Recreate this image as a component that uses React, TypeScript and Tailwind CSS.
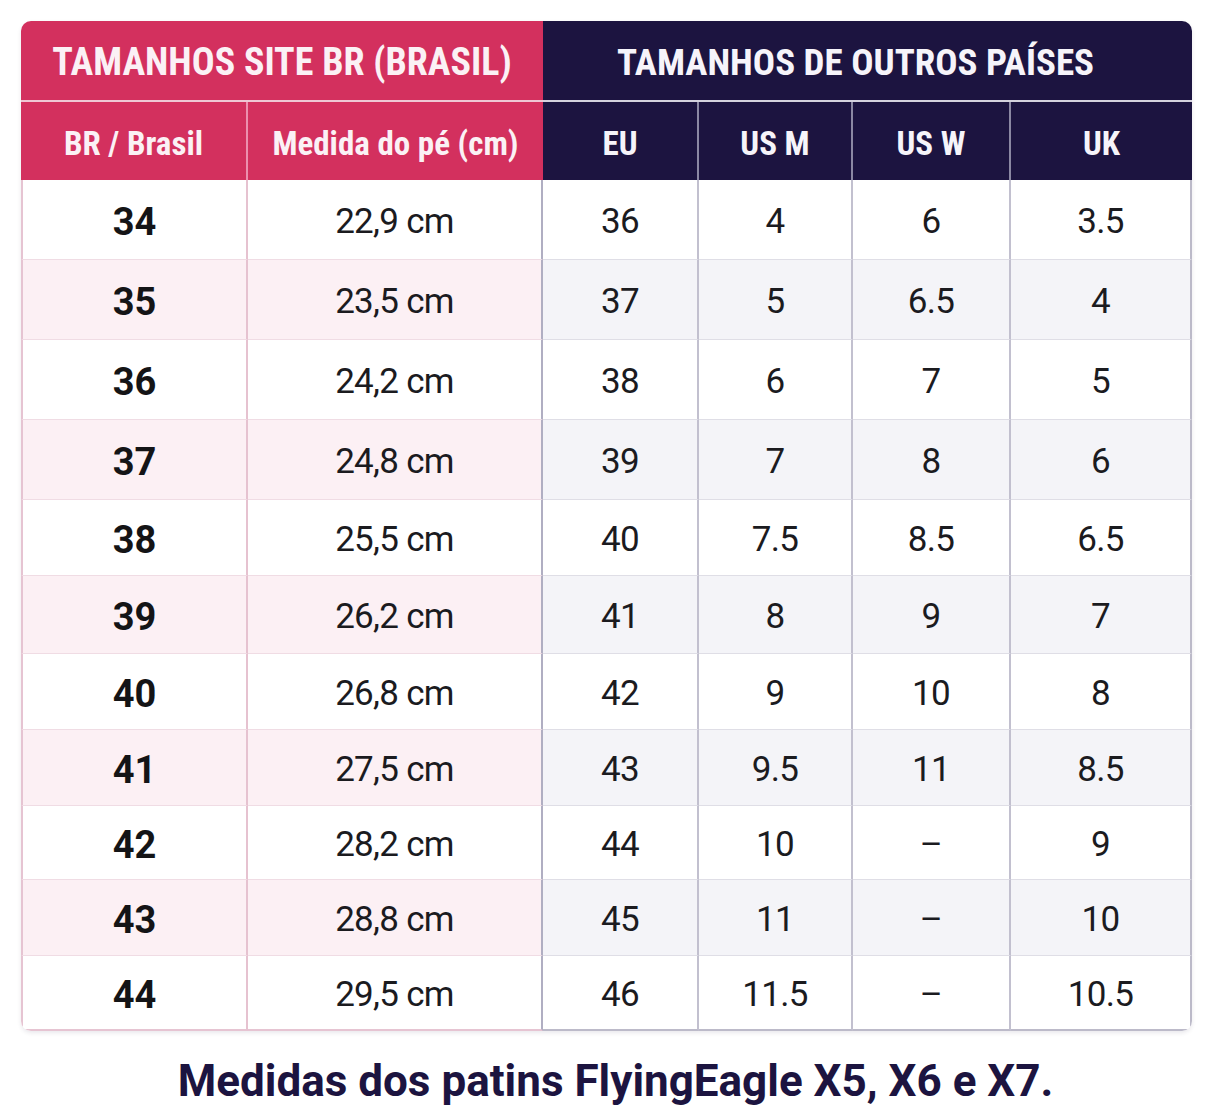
import React from "react";

type Row = { br: string; cm: string; eu: string; usm: string; usw: string; uk: string; h: string };

const rows: Row[] = [
  { br: "34", cm: "22,9 cm", eu: "36", usm: "4", usw: "6", uk: "3.5", h: "h-[80px]" },
  { br: "35", cm: "23,5 cm", eu: "37", usm: "5", usw: "6.5", uk: "4", h: "h-[80px]" },
  { br: "36", cm: "24,2 cm", eu: "38", usm: "6", usw: "7", uk: "5", h: "h-[80px]" },
  { br: "37", cm: "24,8 cm", eu: "39", usm: "7", usw: "8", uk: "6", h: "h-[80px]" },
  { br: "38", cm: "25,5 cm", eu: "40", usm: "7.5", usw: "8.5", uk: "6.5", h: "h-[76px]" },
  { br: "39", cm: "26,2 cm", eu: "41", usm: "8", usw: "9", uk: "7", h: "h-[78px]" },
  { br: "40", cm: "26,8 cm", eu: "42", usm: "9", usw: "10", uk: "8", h: "h-[76px]" },
  { br: "41", cm: "27,5 cm", eu: "43", usm: "9.5", usw: "11", uk: "8.5", h: "h-[76px]" },
  { br: "42", cm: "28,2 cm", eu: "44", usm: "10", usw: "–", uk: "9", h: "h-[74px]" },
  { br: "43", cm: "28,8 cm", eu: "45", usm: "11", usw: "–", uk: "10", h: "h-[76px]" },
  { br: "44", cm: "29,5 cm", eu: "46", usm: "11.5", usw: "–", uk: "10.5", h: "h-[75px]" },
];

const narrow = "font-['Liberation_Sans_Narrow','Roboto_Condensed','DejaVu_Sans_Condensed',sans-serif]";
const roboto = "font-['Roboto','Liberation_Sans',sans-serif]";

export default function App() {
  return (
    <div className="min-h-[1112px] w-[1231px] bg-white">
      <div className="pt-[21px] pl-[21px]">
        <div className="w-[1171px] overflow-hidden rounded-[10px] shadow-[0_2px_4px_rgba(40,30,70,0.10)]">
          {/* top header */}
          <div className="flex h-[79px]">
            <div className={`flex w-[522px] items-center justify-center pt-[4px] bg-[#d3305e] text-[38px] font-bold text-[#fbf1f5] ${narrow}`}>
              TAMANHOS SITE BR (BRASIL)
            </div>
            <div className={`flex w-[649px] items-center justify-center pt-[4px] pr-[24px] bg-[#1c1440] text-[37px] font-bold text-[#f6f4fa] ${narrow}`}>
              TAMANHOS DE OUTROS PAÍSES
            </div>
          </div>
          <div className="flex h-[2px]">
            <div className="w-[522px] bg-[#efc6d4]" />
            <div className="w-[649px] bg-[#d4d2de]" />
          </div>
          {/* sub header */}
          <div className={`flex h-[78px] text-[33px] font-bold ${narrow}`}>
            <div className="flex w-[227px] items-center justify-center pt-[6px] border-r-2 border-r-[#ec8fae] bg-[#d3305e] text-[#fbf1f5]">
              BR / Brasil
            </div>
            <div className="flex w-[295px] items-center justify-center pt-[6px] bg-[#d3305e] text-[#fbf1f5]">
              Medida do pé (cm)
            </div>
            <div className="flex w-[156px] items-center justify-center pt-[6px] border-r-2 border-r-[#8b88a3] bg-[#1c1440] text-[#f6f4fa]">
              EU
            </div>
            <div className="flex w-[154px] items-center justify-center pt-[6px] border-r-2 border-r-[#8b88a3] bg-[#1c1440] text-[#f6f4fa]">
              US M
            </div>
            <div className="flex w-[158px] items-center justify-center pt-[6px] border-r-2 border-r-[#8b88a3] bg-[#1c1440] text-[#f6f4fa]">
              US W
            </div>
            <div className="flex w-[181px] items-center justify-center pt-[6px] bg-[#1c1440] text-[#f6f4fa]">
              UK
            </div>
          </div>
          {/* body */}
          {rows.map((r, i) => {
            const odd = i % 2 === 1;
            const last = i === rows.length - 1;
            const pinkBg = odd ? "bg-[#fcf0f4]" : "bg-white";
            const grayBg = odd ? "bg-[#f4f4f8]" : "bg-white";
            const pinkB = last ? "border-b-2 border-b-[#e6c4d2]" : "border-b border-b-[#f0dce4]";
            const grayB = last ? "border-b-2 border-b-[#bcbac9]" : "border-b border-b-[#dfdee6]";
            return (
              <div key={r.br} className={`flex ${r.h} text-[35px] tracking-[-0.02em] text-[#1b1b1f] ${roboto}`}>
                <div className={`flex w-[227px] items-center justify-center pt-[5px] border-l-2 border-l-[#e6c4d2] border-r-2 border-r-[#e6c2d0] text-[38px] font-bold tracking-normal text-[#141416] ${pinkBg} ${pinkB}`}>
                  {r.br}
                </div>
                <div className={`flex w-[295px] items-center justify-center pt-[5px] border-r-2 border-r-[#b0aec2] ${pinkBg} ${pinkB}`}>
                  {r.cm}
                </div>
                <div className={`flex w-[156px] items-center justify-center pt-[5px] border-r-2 border-r-[#c2c0cf] ${grayBg} ${grayB}`}>
                  {r.eu}
                </div>
                <div className={`flex w-[154px] items-center justify-center pt-[5px] border-r-2 border-r-[#c2c0cf] ${grayBg} ${grayB}`}>
                  {r.usm}
                </div>
                <div className={`flex w-[158px] items-center justify-center pt-[5px] border-r-2 border-r-[#c2c0cf] ${grayBg} ${grayB}`}>
                  {r.usw}
                </div>
                <div className={`flex w-[181px] items-center justify-center pt-[5px] border-r-2 border-r-[#bcbac9] ${grayBg} ${grayB}`}>
                  {r.uk}
                </div>
              </div>
            );
          })}
        </div>
      </div>
      <div className={`mt-[24px] text-center text-[44px] font-bold leading-[52px] text-[#1c1440] ${roboto}`}>
        Medidas dos patins FlyingEagle X5, X6 e X7.
      </div>
    </div>
  );
}
